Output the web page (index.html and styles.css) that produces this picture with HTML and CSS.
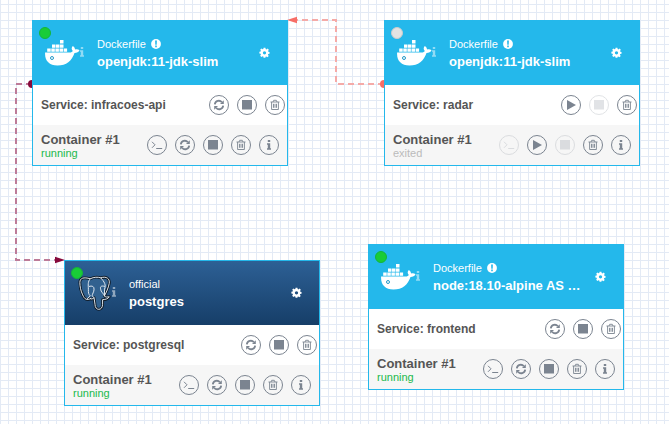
FILE: index.html
```html
<!DOCTYPE html>
<html lang="en">
<head>
<meta charset="utf-8">
<title>Services</title>
<link rel="stylesheet" href="styles.css">
</head>
<body>
<svg width="0" height="0" class="defs">
  <symbol id="refresh" viewBox="0 0 12 12"><path d="M1.8 5.3A4 4 0 0 1 8.9 3.3M10.2 6.7A4 4 0 0 1 3.1 8.7" fill="none" stroke="currentColor" stroke-width="1.8"/><path d="M10.8 1.2V5H7zM1.2 10.8V7H5z" fill="currentColor"/></symbol>
  <symbol id="stop" viewBox="0 0 12 12"><path d="M1 1h10v9.5H1z" fill="currentColor"/></symbol>
  <symbol id="play" viewBox="0 0 12 12"><path d="M2 1l9 5-9 5z" fill="currentColor"/></symbol>
  <symbol id="trash" viewBox="0 0 12 12"><path d="M1.5 3h9M4 3l.7-1.7h2.6L8 3M2.6 3v7.5h6.8V3M4.5 4.8v4M6 4.8v4M7.5 4.8v4" fill="none" stroke="currentColor" stroke-width=".9"/></symbol>
  <symbol id="term" viewBox="0 0 12 12"><path d="M1 2.8l3 3-3 3M5.2 9.5h6" fill="none" stroke="currentColor"/></symbol>
  <symbol id="info" viewBox="0 0 12 12"><path d="M4.8 1h2.4v2H4.8zM4 4.2h3.2v5H8v1.6H4V9.2h.8V5.7H4z" fill="currentColor"/></symbol>
  <symbol id="gear" viewBox="0 0 12 12"><path fill="currentColor" fill-rule="evenodd" d="M5 .8h2l.3 1.5.8.3 1.3-.9 1.3 1.4-.8 1.3.3.8 1.3.3v1.9l-1.4.3-.4.8.9 1.3-1.4 1.3-1.3-.8-.8.3L7 11.8H5l-.3-1.5-.8-.3-1.3.8-1.3-1.3.8-1.3-.3-.8L.4 7.2V5.3L1.8 5l.3-.8-.8-1.3 1.3-1.3 1.3.9.8-.3zM6 4.5a1.8 1.8 0 1 0 0 3.6 1.8 1.8 0 0 0 0-3.6z"/></symbol>
  <symbol id="alert" viewBox="0 0 10 10"><circle cx="5" cy="5" r="4.9" fill="#fff"/><path d="M4.1 1.5h1.8l-.2 4.2H4.3zM4.2 6.6h1.6v1.6H4.2z" fill="#24b8eb"/></symbol>
  <symbol id="docker" viewBox="0 0 36 28"><path fill="#fff" d="M15 1h3.5v3.5H15zM7 5.5h3.5v3.3H7zM11 5.5h3.5v3.3H11zM15 5.5h3.5v3.3H15zM2.2 9.5h3.5v3.3H2.2zM6.3 9.5h3.5v3.3H6.3zM10.4 9.5h3.5v3.3h-3.5zM14.5 9.5H18v3.3h-3.5zM18.6 9.5h3.5v3.3h-3.5zM.1 13.5h24.3c2 0 3-.7 3.4-1.5-1.5-1.7-1.5-3.5 0-5 1.5.8 2.2 2.2 2.2 3.5 1.8-.4 3.4-.2 4.5.7-.8 1.8-2.6 2.7-5 2.7C26.8 22 21.4 26.4 12.5 26.4 4 26.4-.4 21.7.1 13.5z"/><circle cx="7" cy="19" r="1.5" fill="#fff" stroke="#2499c8"/></symbol>
  <symbol id="elephant" viewBox="0 0 36 38">
    <path d="M13 25C10 27 7 26 5 21 3 17 2 12 2 8 2 3 6 2 13 4 17 2 21 2 24 3c6-2 10 1 9 6-1 5-3 9-5 13 1 2 3 1 5 1-1 2-4 3-7 3v5c0 7-8 7-8 0l-1-7c-1 1-3 2-4 1z" fill="#31618f" stroke="#101c29" stroke-width="3" stroke-linejoin="round"/>
    <g fill="none" stroke="#e8eef4" stroke-width="1" stroke-linecap="round" stroke-linejoin="round">
      <path d="M13 25C10 27 7 26 5 21 3 17 2 12 2 8 2 3 6 2 13 4 17 2 21 2 24 3c6-2 10 1 9 6-1 5-3 9-5 13 1 2 3 1 5 1-1 2-4 3-7 3v5c0 7-8 7-8 0l-1-7c-1 1-3 2-4 1z"/>
      <path d="M13 4c-3 3-2 7-2 11 0 4 0 5 2 7l-3 3M12 12c3-1 5 0 5 3s-2 5-2 7l2 2M24 3c4 4 6 8 4 12v7M28 12c-3-1-5 0-4 3 0 3 3 4 4 7"/>
    </g>
  </symbol>
</svg>
<main class="canvas" id="canvas">
  <svg class="links" viewBox="0 0 669 424">
    <g fill="none" stroke-width="2" stroke-dasharray="6 4">
      <path d="M32 84H16V260H56" stroke="#bd7b98"/>
      <path d="M384 84H336V20H297" stroke="#f5aaa7"/>
    </g>
    <circle cx="32" cy="84" r="4" fill="#86093b"/><path d="M55 256.7v6.6l10-3.3z" fill="#86093b"/>
    <circle cx="384" cy="84" r="4" fill="#f76e67"/><path d="M297 16.7v6.6L287 20z" fill="#f76e67"/>
  </svg>
</main>
<script src="app.js"></script>
</body>
</html>
```
FILE: styles.css
```css
* { box-sizing: border-box; }
body { margin: 0; font-family: "Liberation Sans", Arial, sans-serif; }
.defs { position: absolute; }
.canvas {
  position: relative; width: 669px; height: 424px; overflow: hidden;
  background: linear-gradient(90deg, #e3eaf5 1px, transparent 1px) 0 0 / 8px 8px,
    linear-gradient(#e3eaf5 1px, transparent 1px) 0 4px / 8px 8px, #fff;
}
.links { position: absolute; left: 0; top: 0; width: 669px; height: 424px; }
.card { position: absolute; width: 256px; height: 146px; border: 1px solid #24b8eb; background: #fff; color: #555; }
.n1 { left: 32px; top: 20px; }
.n2 { left: 384px; top: 20px; }
.n3 { left: 64px; top: 260px; }
.n4 { left: 368px; top: 244px; }
.head { position: relative; height: 64px; display: flex; align-items: center; padding: 0 17px 0 12px; background: #24b8eb; color: #fff; }
.postgres .head { background: linear-gradient(#2d6095, #163e68); }
.status { position: absolute; left: 6px; top: 6px; width: 12px; height: 12px; border-radius: 50%; border: 1px solid #14b53b; background: #19cc37; }
.off .status { background: #e3e3e3; border-color: #ccc; }
.logo { width: 36px; height: 28px; flex: none; }
.postgres .logo { height: 36px; margin-top: -1px; }
.hint { width: 12px; height: 12px; flex: none; opacity: .5; margin: 0 2px 3px -5px; }
.names { width: 155px; margin-left: 7px; flex: none; }
.kind { height: 16px; display: flex; align-items: center; gap: 5px; font-size: 11px; line-height: 16px; }
.kind svg { width: 10px; height: 10px; }
.title { margin-top: 1px; margin-bottom: -1px; font-size: 13px; font-weight: bold; line-height: 18px; white-space: nowrap; }
.gear { width: 11px; height: 11px; margin: 0 0 2px auto; }
.row { height: 40px; display: flex; align-items: center; padding: 0 2px 0 8px; }
.container { background: #f6f6f6; padding-right: 8px; }
.service { font-size: 12px; font-weight: bold; }
.name { font-size: 13px; font-weight: bold; line-height: 15px; }
.state { font-size: 11px; line-height: 12px; color: #21b94b; }
.off .state { color: #bbb; }
.actions { margin-left: auto; display: flex; gap: 8px; }
.btn { width: 20px; height: 20px; padding: 0; border: 1px solid #7b8490; border-radius: 50%; background: transparent; color: #7b8490; display: flex; align-items: center; justify-content: center; }
.btn svg { width: 12px; height: 12px; }
.btn:disabled { opacity: .22; }
```
FILE: app.js
```js
const nodes = [
  { kind: 'Dockerfile', title: 'openjdk:11-jdk-slim', service: 'infracoes-api', on: true },
  { kind: 'Dockerfile', title: 'openjdk:11-jdk-slim', service: 'radar', on: false },
  { kind: 'official', title: 'postgres', service: 'postgresql', on: true, postgres: true },
  { kind: 'Dockerfile', title: 'node:18.10-alpine AS …', service: 'frontend', on: true }
];
const icon = (id, cls = '') => `<svg class="${cls}"><use href="#${id}"/></svg>`;
const btn = (id, disabled) => `<button class="btn" aria-label="${id}" ${disabled ? 'disabled' : ''}>${icon(id)}</button>`;
nodes.forEach((n, i) => {
  const main = btn(n.on ? 'refresh' : 'play') + btn('stop', !n.on) + btn('trash');
  document.getElementById('canvas').insertAdjacentHTML('beforeend', `
  <section class="card n${i + 1} ${n.on ? '' : 'off'} ${n.postgres ? 'postgres' : ''}">
    <header class="head"><span class="status"></span>${icon(n.postgres ? 'elephant' : 'docker', 'logo')}${icon('info', 'hint')}
      <div class="names"><div class="kind">${n.kind}${n.postgres ? '' : icon('alert')}</div><div class="title">${n.title}</div></div>${icon('gear', 'gear')}</header>
    <div class="row"><div class="service">Service: ${n.service}</div><div class="actions">${main}</div></div>
    <div class="row container"><div><div class="name">Container #1</div><div class="state">${n.on ? 'running' : 'exited'}</div></div>
      <div class="actions">${btn('term', !n.on)}${main}${btn('info')}</div></div>
  </section>`);
});
```
